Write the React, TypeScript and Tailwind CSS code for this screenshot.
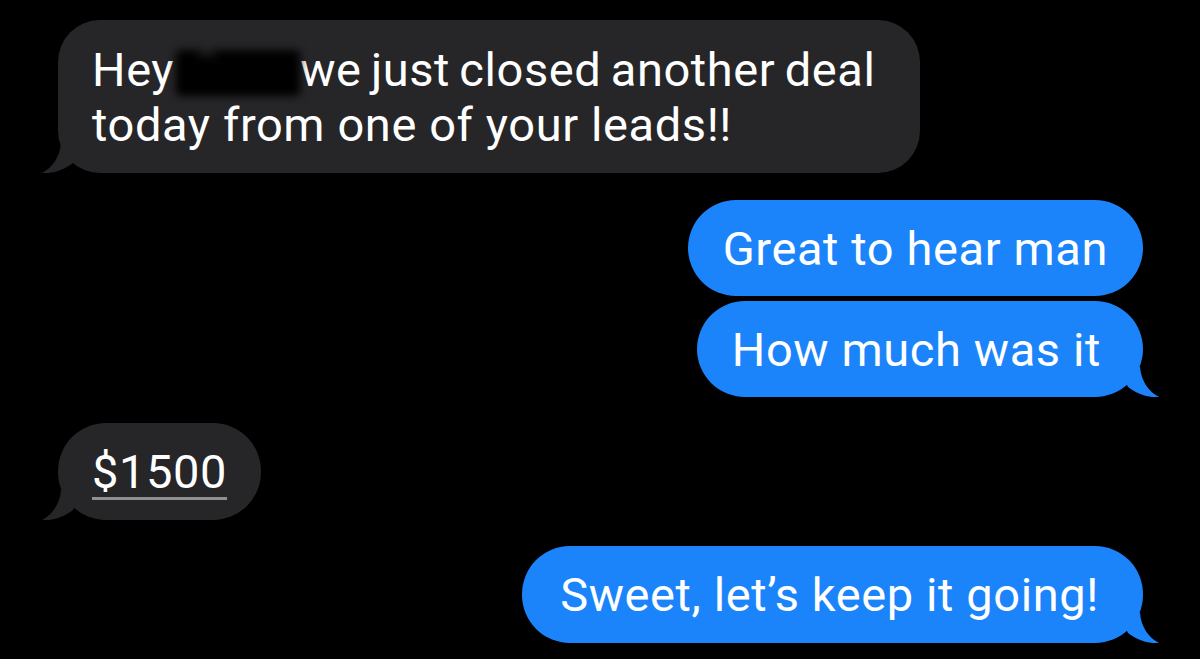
import React from "react";

const GRAY = "#262628";
const BLUE = "#1b84fb";

function Tail({ side, color }: { side: "left" | "right"; color: string }) {
  return (
    <svg
      width="40"
      height="30"
      viewBox="0 0 40 30"
      className={
        side === "left"
          ? "absolute left-[-16px] bottom-0"
          : "absolute right-[-16px] bottom-0 -scale-x-100"
      }
    >
      <path d="M19 0 C18 14 10 25 0 30 C10 31 22 27 31 20 L40 0 Z" fill={color} />
    </svg>
  );
}

export default function App() {
  return (
    <div
      className="w-[1200px] h-[659px] bg-black flex flex-col overflow-hidden text-white tracking-[0.6px]"
      style={{ fontFamily: "Roboto, 'Noto Sans', sans-serif" }}
    >
      {/* incoming 1 */}
      <div className="relative self-start ml-[58px] mt-[20px] w-[862px] rounded-[42px] bg-[#262628] pl-[34px] pt-[22px] pb-[21px] text-[47px] leading-[55px]">
        <div className="whitespace-nowrap">
          Hey
          <span className="relative inline-block align-[-10px] ml-[2px] w-[124px] h-[46px] bg-black blur-[4px] rounded-[4px]">
            <span className="absolute left-[22px] top-[2px] w-[18px] h-[8px] rounded-t-full border-t-2 border-[#555]" />
          </span>
          <span className="[word-spacing:-3px]">we just closed another deal</span>
        </div>
        <div className="whitespace-nowrap">today from one of your leads!!</div>
        <Tail side="left" color={GRAY} />
      </div>

      {/* outgoing 1 */}
      <div className="relative self-end mr-[57px] mt-[27px] h-[96px] rounded-[48px] bg-[#1b84fb] px-[35px] flex items-center text-[47px] leading-[55px]">
        Great to hear man
      </div>

      {/* outgoing 2 */}
      <div className="relative self-end mr-[57px] mt-[5px] h-[96px] rounded-[48px] bg-[#1b84fb] pl-[35px] pr-[42px] flex items-center text-[47px] leading-[55px]">
        How much was it
        <Tail side="right" color={BLUE} />
      </div>

      {/* incoming 2 */}
      <div className="relative self-start ml-[58px] mt-[26px] h-[97px] rounded-[48px] bg-[#262628] px-[34px] flex items-center text-[47px] leading-[55px]">
        <span className="underline decoration-[#8e8e93] decoration-[3px] underline-offset-[9px]">$1500</span>
        <Tail side="left" color={GRAY} />
      </div>

      {/* outgoing 3 */}
      <div className="relative self-end mr-[57px] mt-[26px] h-[97px] rounded-[48px] bg-[#1b84fb] pl-[38px] pr-[44px] flex items-center text-[47px] leading-[55px]">
        Sweet, let’s keep it going!
        <Tail side="right" color={BLUE} />
      </div>
    </div>
  );
}
